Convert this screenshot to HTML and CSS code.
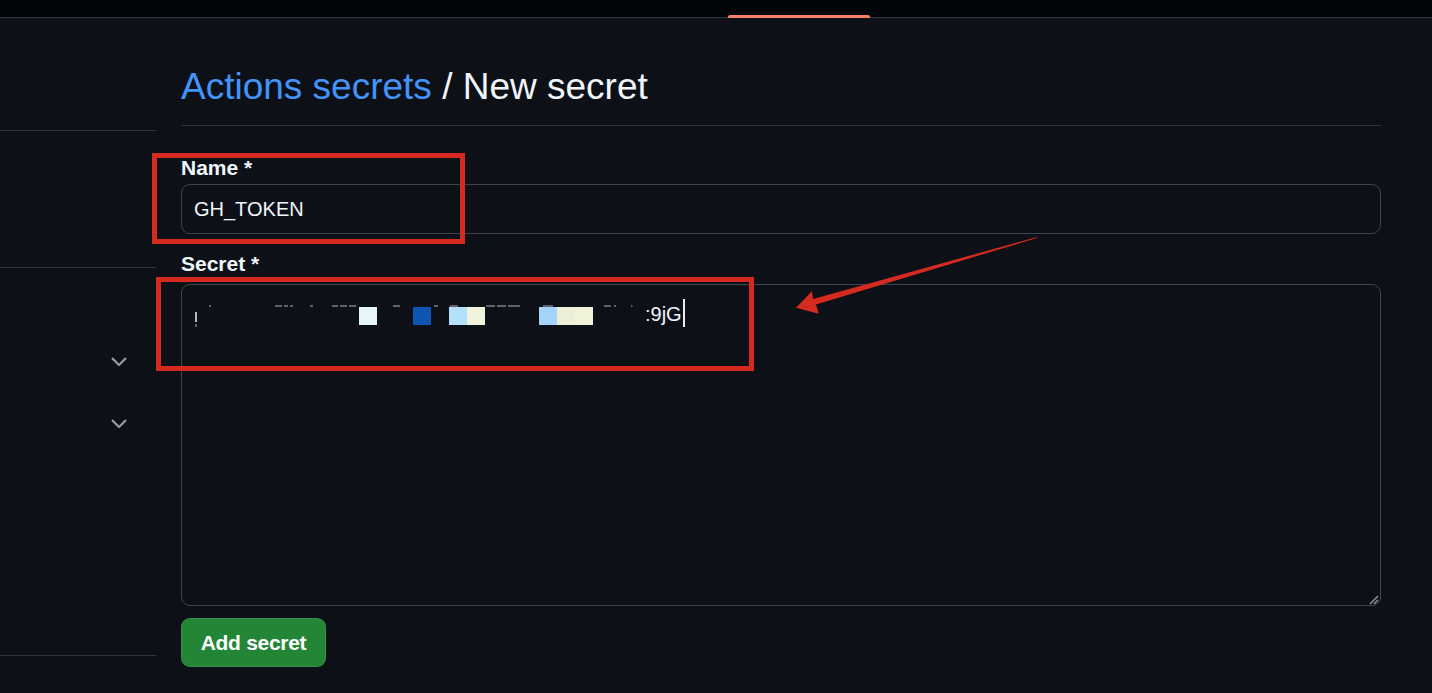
FILE: index.html
```html
<!DOCTYPE html>
<html lang="en">
<head>
  <meta charset="UTF-8">
  <title>New secret</title>
  <link rel="stylesheet" href="styles.css">
</head>
<body>

  <div class="topbar">
    <span class="topbar-current"></span>
  </div>

  <div class="layout">

    <div class="sidebar">
      <div class="side-block side-block-top"></div>
      <div class="side-block side-block-mid"></div>
      <div class="side-block side-block-nav">
        <div class="side-row">
          <svg class="chevron" viewBox="0 0 16 16" width="24" height="24"><path d="M12.78 5.22a.749.749 0 0 1 0 1.060l-4.25 4.25a.749.749 0 0 1-1.06 0L3.22 6.28a.749.749 0 1 1 1.06-1.06L8 8.939l3.72-3.719a.749.749 0 0 1 1.06 0Z"></path></svg>
        </div>
        <div class="side-row">
          <svg class="chevron" viewBox="0 0 16 16" width="24" height="24"><path d="M12.78 5.22a.749.749 0 0 1 0 1.060l-4.25 4.25a.749.749 0 0 1-1.06 0L3.22 6.28a.749.749 0 1 1 1.06-1.06L8 8.939l3.72-3.719a.749.749 0 0 1 1.06 0Z"></path></svg>
        </div>
      </div>
    </div>

    <div class="content">
      <h2 class="subhead"><a href="#" class="subhead-link">Actions secrets</a> / New secret</h2>

      <form class="secret-form">
        <label class="field-label field-label-name">Name *</label>
        <div class="input">GH_TOKEN</div>

        <label class="field-label field-label-secret">Secret *</label>
        <div class="secret-box">
          <div class="secret-line"><svg class="redacted" width="451" height="30" viewBox="0 0 451 30">
              <!-- leftovers of the erased token -->
              <g class="leftovers">
                <rect x="1" y="13" width="2" height="10"></rect>
                <rect x="1.5" y="25" width="1" height="3"></rect>
                <rect x="15" y="6.5" width="2" height="1"></rect>
                <rect x="81" y="6.5" width="7" height="1"></rect>
                <rect x="90" y="6.5" width="4" height="1"></rect>
                <rect x="96" y="6.5" width="3" height="1"></rect>
                <rect x="116" y="6.5" width="3" height="1"></rect>
                <rect x="138" y="6.5" width="6" height="1"></rect>
                <rect x="146" y="6.5" width="7" height="1"></rect>
                <rect x="155" y="6.5" width="7" height="1"></rect>
                <rect x="199" y="6.5" width="7" height="1"></rect>
                <rect x="240" y="6.5" width="4" height="1"></rect>
                <rect x="256" y="6.5" width="8" height="1"></rect>
                <rect x="292" y="6.5" width="9" height="1"></rect>
                <rect x="303" y="6.5" width="9" height="1"></rect>
                <rect x="314" y="6.5" width="12" height="1"></rect>
                <rect x="349" y="6.5" width="10" height="1"></rect>
                <rect x="410" y="6.5" width="7" height="1"></rect>
                <rect x="420" y="6.5" width="2" height="1"></rect>
                <rect x="437" y="6.5" width="1.5" height="1"></rect>
              </g>
              <rect x="165" y="8" width="18" height="18" fill="#e8f4fb"></rect>
              <rect x="219" y="8" width="18" height="18" fill="#0f56b3"></rect>
              <rect x="255" y="8" width="18" height="18" fill="#b3e0fb"></rect>
              <rect x="273" y="8" width="18" height="18" fill="#f0f4dc"></rect>
              <rect x="345" y="8" width="18" height="18" fill="#a5d4fa"></rect>
              <rect x="363" y="8" width="18" height="18" fill="#eeefd8"></rect>
              <rect x="381" y="8" width="18" height="18" fill="#f1f4d9"></rect>
            </svg>:9jG<span class="caret"></span></div>
          <svg class="grip" width="10" height="10" viewBox="0 0 10 10"><path d="M1 9 L9 1 M5 9 L9 5"></path></svg>
        </div>

        <button type="button" class="btn-primary">Add secret</button>
      </form>
    </div>

  </div>

  <!-- red markup drawn over the screenshot -->
  <svg class="annotations" width="1432" height="693" viewBox="0 0 1432 693">
    <rect x="154.5" y="155.5" width="308" height="86"></rect>
    <rect x="158.5" y="279.5" width="593" height="89"></rect>
    <polygon points="796,307.7 812,291 813,299 1037,237 1037.5,237.8 816,304.5 818.7,313.7"></polygon>
  </svg>

</body>
</html>
```

FILE: styles.css
```css
* {
  box-sizing: border-box;
}

body {
  margin: 0;
  padding: 0;
  height: 693px;
  overflow: hidden;
  position: relative;
  background-color: #0d1117;
  color: #f0f6fc;
  font-family: "Liberation Sans", Arial, sans-serif;
}

.topbar {
  height: 18px;
  background-color: #010409;
  border-bottom: 1px solid #30363d;
  display: flex;
  align-items: flex-end;
  padding-left: 728px;
}

.topbar-current {
  width: 142px;
  height: 3px;
  margin-bottom: -1px;
  background-color: #f78166;
  border-radius: 2px 2px 0 0;
}

.layout {
  display: flex;
  gap: 25px;
}

/* sidebar */

.sidebar {
  width: 156px;
  flex-shrink: 0;
}

.side-block {
  border-bottom: 1px solid #30363d;
}

.side-block-top {
  height: 113px;
}

.side-block-mid {
  height: 137px;
}

.side-block-nav {
  height: 388px;
  padding-top: 63px;
}

.side-row {
  height: 62px;
  display: flex;
  align-items: center;
  justify-content: flex-end;
  padding-right: 25px;
}

.chevron {
  fill: #9198a1;
}

/* main column */

.content {
  width: 1200px;
  padding-top: 46px;
}

.subhead {
  margin: 0;
  padding-bottom: 15px;
  border-bottom: 1px solid #30363d;
  font-size: 37px;
  font-weight: 400;
  line-height: 46px;
  color: #f0f6fc;
}

.subhead-link {
  color: #4493f8;
  text-decoration: none;
}

.field-label {
  display: block;
  font-size: 21px;
  font-weight: 700;
  line-height: 30px;
}

.field-label-name {
  margin-top: 27px;
  margin-bottom: 1px;
}

.field-label-secret {
  margin-top: 15px;
  margin-bottom: 5px;
}

.input {
  height: 50px;
  padding: 0 12px;
  border: 1px solid #3d444d;
  border-radius: 9px;
  font-size: 20px;
  line-height: 48px;
  color: #f0f6fc;
}

.secret-box {
  height: 322px;
  display: flex;
  flex-direction: column;
  padding: 14px 12px 0;
  border: 1px solid #3d444d;
  border-radius: 9px;
}

.secret-line {
  font-size: 20px;
  line-height: 30px;
  white-space: nowrap;
  color: #f0f6fc;
}

.redacted {
  vertical-align: top;
}

.leftovers {
  fill: #e6edf3;
  opacity: 0.75;
}

.caret {
  display: inline-block;
  width: 2px;
  height: 28px;
  margin-left: 1px;
  vertical-align: top;
  background-color: #e6edf3;
}

.grip {
  align-self: flex-end;
  margin-top: auto;
  margin-right: -11px;
  stroke: #8b949e;
  stroke-width: 1.5;
}

.btn-primary {
  display: block;
  margin-top: 12px;
  height: 49px;
  width: 145px;
  padding: 0;
  border: 1px solid rgba(240, 246, 252, 0.1);
  border-radius: 9px;
  background-color: #238636;
  color: #ffffff;
  font-family: inherit;
  font-size: 21px;
  font-weight: 700;
  letter-spacing: -0.3px;
}

/* screenshot markup */

.annotations {
  position: absolute;
  top: 0;
  left: 0;
  pointer-events: none;
}

.annotations rect {
  fill: none;
  stroke: #d42a1f;
  stroke-width: 5;
}

.annotations polygon {
  fill: #d42a1f;
}
```
